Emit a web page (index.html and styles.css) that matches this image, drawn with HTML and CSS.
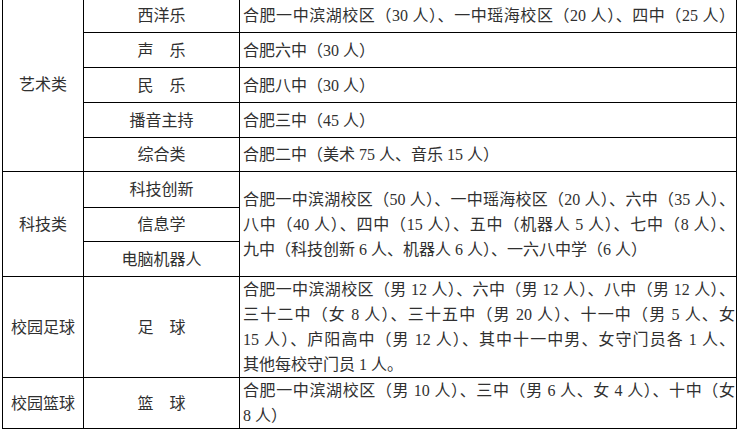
FILE: index.html
```html
<!DOCTYPE html>
<html lang="zh-CN">
<head>
<meta charset="utf-8">
<title>招生名额表</title>
<link rel="stylesheet" href="styles.css">
</head>
<body>
<table class="plan">
  <colgroup>
    <col class="c-cat">
    <col class="c-item">
    <col class="c-school">
  </colgroup>
  <tbody>
    <tr class="r35">
      <td class="cat" rowspan="5">艺术类</td>
      <td class="item">西洋乐</td>
      <td class="school"><span class="ln">合肥一中滨湖校区（30 人）、一中瑶海校区（20 人）、四中（25 人）</span></td>
    </tr>
    <tr class="r35">
      <td class="item">声　乐</td>
      <td class="school"><span class="ln end">合肥六中（30 人）</span></td>
    </tr>
    <tr class="r35">
      <td class="item">民　乐</td>
      <td class="school"><span class="ln end">合肥八中（30 人）</span></td>
    </tr>
    <tr class="r35">
      <td class="item">播音主持</td>
      <td class="school"><span class="ln end">合肥三中（45 人）</span></td>
    </tr>
    <tr class="r34">
      <td class="item">综合类</td>
      <td class="school"><span class="ln end">合肥二中（美术 75 人、音乐 15 人）</span></td>
    </tr>
    <tr class="r36">
      <td class="cat" rowspan="3">科技类</td>
      <td class="item">科技创新</td>
      <td class="school" rowspan="3">
        <span class="ln">合肥一中滨湖校区（50 人）、一中瑶海校区（20 人）、六中（35 人）、</span>
        <span class="ln">八中（40 人）、四中（15 人）、五中（机器人 5 人）、七中（8 人）、</span>
        <span class="ln end">九中（科技创新 6 人、机器人 6 人）、一六八中学（6 人）</span>
      </td>
    </tr>
    <tr class="r34">
      <td class="item">信息学</td>
    </tr>
    <tr class="r35">
      <td class="item">电脑机器人</td>
    </tr>
    <tr class="r101">
      <td class="cat">校园足球</td>
      <td class="item">足　球</td>
      <td class="school">
        <span class="ln">合肥一中滨湖校区（男 12 人）、六中（男 12 人）、八中（男 12 人）、</span>
        <span class="ln">三十二中（女 8 人）、三十五中（男 20 人）、十一中（男 5 人、女</span>
        <span class="ln">15 人）、庐阳高中（男 12 人）、其中十一中男、女守门员各 1 人、</span>
        <span class="ln end">其他每校守门员 1 人。</span>
      </td>
    </tr>
    <tr class="r49">
      <td class="cat">校园篮球</td>
      <td class="item">篮　球</td>
      <td class="school">
        <span class="ln">合肥一中滨湖校区（男 10 人）、三中（男 6 人、女 4 人）、十中（女</span>
        <span class="ln end">8 人）</span>
      </td>
    </tr>
  </tbody>
</table>
</body>
</html>
```

FILE: styles.css
```css
html, body {
  margin: 0;
  padding: 0;
  background: #ffffff;
}

body {
  width: 738px;
  height: 430px;
  overflow: hidden;
  font-family: "Liberation Serif", "Noto Sans CJK SC", serif;
  font-size: 16px;
  color: #303030;
}

.plan {
  border-collapse: collapse;
  table-layout: fixed;
  width: 734px;
  margin: -3px 0 0 2px;
}

.c-cat { width: 81px; }
.c-item { width: 156px; }
.c-school { width: 497px; }

.plan td {
  border: 1px solid #000;
  padding: 0;
  vertical-align: middle;
  line-height: 25px;
}

.plan .cat,
.plan .item {
  text-align: center;
}

.plan .school {
  padding: 0 1px 0 3px;
}

.ln {
  display: block;
  white-space: nowrap;
  text-align: justify;
  text-align-last: justify;
}

.ln.end {
  text-align-last: left;
}

.r35 { height: 35px; }
.r34 { height: 34px; }
.r36 { height: 36px; }
.r101 { height: 101px; }
.r49 { height: 49px; }
```
